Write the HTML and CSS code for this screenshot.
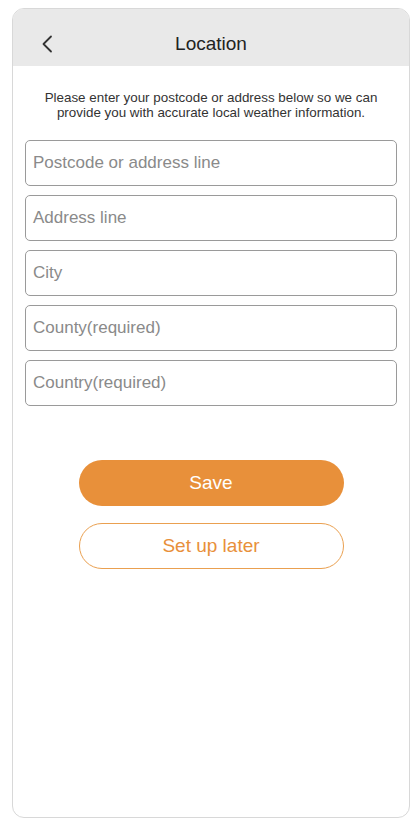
FILE: index.html
```html
<!DOCTYPE html>
<html>
<head>
<meta charset="utf-8">
<link rel="stylesheet" href="styles.css">
</head>
<body>
<div class="frame">
  <header class="topbar">
    <span class="back">
      <svg width="12" height="18" viewBox="0 0 12 18"><path d="M10 1.5 L2.5 9 L10 16.5" fill="none" stroke="#333" stroke-width="1.8" stroke-linecap="round" stroke-linejoin="round"/></svg>
    </span>
    <h1 class="title">Location</h1>
  </header>
  <main class="content">
    <p class="intro">Please enter your postcode or address below so we can provide you with accurate local weather information.</p>
    <div class="fields">
      <div class="field">Postcode or address line</div>
      <div class="field">Address line</div>
      <div class="field">City</div>
      <div class="field">County(required)</div>
      <div class="field">Country(required)</div>
    </div>
    <div class="actions">
      <button class="btn btn-primary">Save</button>
      <button class="btn btn-outline">Set up later</button>
    </div>
  </main>
</div>
</body>
</html>
```
FILE: styles.css
```css
html, body {
  margin: 0;
  padding: 0;
  background: #fff;
}
body {
  font-family: "Liberation Sans", Arial, sans-serif;
  padding: 8px 10px 0 12px;
}
.frame {
  width: 398px;
  height: 810px;
  box-sizing: border-box;
  border: 1px solid #d8d8d8;
  border-radius: 12px;
  overflow: hidden;
  background: #fff;
}
.topbar {
  position: relative;
  height: 57px;
  background: #e9e9e9;
  display: flex;
  align-items: center;
  justify-content: center;
}
.back {
  position: absolute;
  left: 28px;
  top: 26px;
  display: flex;
}
.title {
  margin: 0;
  font-size: 19px;
  font-weight: normal;
  color: #222;
  padding-top: 13px;
}
.content {
  padding: 24px 12px 0;
}
.intro {
  margin: 0 14px 20px;
  font-size: 13.4px;
  line-height: 15px;
  color: #333;
  text-align: center;
}
.fields {
  display: flex;
  flex-direction: column;
  gap: 9px;
}
.field {
  height: 46px;
  box-sizing: border-box;
  border: 1px solid #9a9a9a;
  border-radius: 5px;
  padding-left: 7px;
  display: flex;
  align-items: center;
  font-size: 17px;
  color: #8a8a8a;
}
.actions {
  margin-top: 54px;
  display: flex;
  flex-direction: column;
  align-items: center;
  gap: 17px;
}
.btn {
  width: 265px;
  height: 46px;
  border-radius: 23px;
  font-family: "Liberation Sans", Arial, sans-serif;
  font-size: 19px;
  box-sizing: border-box;
  cursor: pointer;
}
.btn-primary {
  background: #e8903a;
  color: #fff;
  border: none;
}
.btn-outline {
  background: #fff;
  color: #e8903a;
  border: 1px solid #eaa050;
}
```
